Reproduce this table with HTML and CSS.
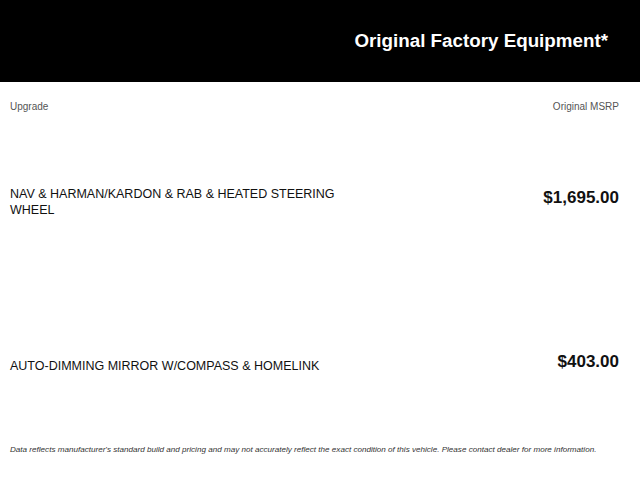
FILE: index.html
```html
<!DOCTYPE html>
<html>
<head>
<meta charset="utf-8">
<link rel="stylesheet" href="styles.css">
</head>
<body>
<div class="header"><h1 class="title">Original Factory Equipment*</h1></div>
<div class="labels"><span>Upgrade</span><span>Original MSRP</span></div>
<div class="rows">
  <div class="row"><div class="name">NAV &amp; HARMAN/KARDON &amp; RAB &amp; HEATED STEERING WHEEL</div><div class="price">$1,695.00</div></div>
  <div class="row"><div class="name">AUTO-DIMMING MIRROR W/COMPASS &amp; HOMELINK</div><div class="price">$403.00</div></div>
</div>
<p class="note">Data reflects manufacturer's standard build and pricing and may not accurately reflect the exact condition of this vehicle. Please contact dealer for more information.</p>
</body>
</html>
```
FILE: styles.css
```css
* { box-sizing: border-box; }
body { margin: 0; font-family: "Liberation Sans", Arial, sans-serif; background: #fff; color: #111; }
.header { height: 82px; background: #000; display: flex; align-items: center; justify-content: flex-end; padding-right: 32px; }
.title { margin: 0; color: #fff; font-size: 18.8px; font-weight: bold; line-height: 22px; }
.labels { display: flex; justify-content: space-between; padding: 18px 21px 9px 10px; font-size: 10px; line-height: 13px; color: #555; }
.rows { display: flex; flex-direction: column; gap: 4px; }
.row { height: 160px; display: flex; align-items: center; justify-content: space-between; padding: 0 21px 0 10px; }
.name { width: 350px; font-size: 12.5px; line-height: 16px; color: #111; }
.price { font-size: 17px; font-weight: bold; line-height: 20px; margin-bottom: 8px; color: #111; }
.note { margin: 0; padding-left: 10px; font-size: 8.1px; line-height: 8px; font-style: italic; color: #333; }
```
